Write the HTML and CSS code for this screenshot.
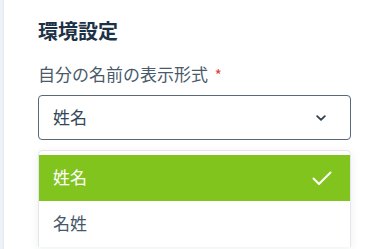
FILE: index.html
```html
<!DOCTYPE html>
<html lang="ja">
<head>
<meta charset="utf-8">
<link rel="stylesheet" href="styles.css">
</head>
<body>
<div class="page">
  <div class="rail"></div>
  <main class="content">
    <h2 class="title">環境設定</h2>
    <div class="label">自分の名前の表示形式 <span class="req">*</span></div>
    <div class="select">
      <span class="value">姓名</span>
      <svg class="chev" width="10" height="6" viewBox="0 0 10 6"><path d="M1.2 1.2 L5 4.8 L8.8 1.2" fill="none" stroke="#2e3f52" stroke-width="1.8" stroke-linecap="round" stroke-linejoin="round"/></svg>
    </div>
    <div class="menu">
      <div class="option selected">
        <span>姓名</span>
        <svg class="check" width="20" height="15" viewBox="0 0 20 15"><path d="M1.5 7.5 L7 13 L18.5 1.5" fill="none" stroke="#ffffff" stroke-width="2" stroke-linecap="round" stroke-linejoin="round"/></svg>
      </div>
      <div class="option">
        <span>名姓</span>
      </div>
    </div>
  </main>
</div>
</body>
</html>
```

FILE: styles.css
```css
html, body {
  margin: 0;
  padding: 0;
  background: #ffffff;
  font-family: "Noto Sans CJK JP", "Noto Sans", sans-serif;
  overflow: hidden;
}
.page {
  display: flex;
  height: 249px;
}
.rail {
  width: 3px;
  flex: none;
  background: #eef1f5;
  border-right: 1px solid #e4e8ed;
}
.content {
  flex: 1;
  padding: 17px 33px 0 34px;
}
.title {
  margin: 0;
  font-size: 20px;
  line-height: 28px;
  font-weight: 700;
  color: #1d3246;
}
.label {
  margin-top: 17px;
  font-size: 17px;
  line-height: 24px;
  color: #4a5a6b;
}
.req {
  color: #e0403a;
  font-size: 15px;
  margin-left: 3px;
}
.select {
  margin-top: 8px;
  height: 45px;
  box-sizing: border-box;
  border: 1px solid #56687a;
  border-radius: 4px;
  display: flex;
  align-items: center;
  justify-content: space-between;
  padding: 0 24px 0 14px;
  font-size: 17px;
  line-height: 22px;
  color: #34475a;
}
.value {
  margin-top: -2px;
}
.chev {
  display: block;
}
.menu {
  margin-top: 10px;
  border: 1px solid #e3e6ea;
  border-bottom: none;
  border-radius: 5px 5px 0 0;
  padding-top: 4px;
  box-shadow: 0 2px 10px rgba(30, 50, 70, 0.08);
}
.option {
  height: 46px;
  display: flex;
  align-items: center;
  justify-content: space-between;
  padding: 0 18px 0 14px;
  font-size: 17px;
  line-height: 22px;
  color: #46576a;
}
.option span {
  margin-top: -2px;
}
.option.selected {
  background: #82c41e;
  color: #ffffff;
}
.check {
  display: block;
}
```
